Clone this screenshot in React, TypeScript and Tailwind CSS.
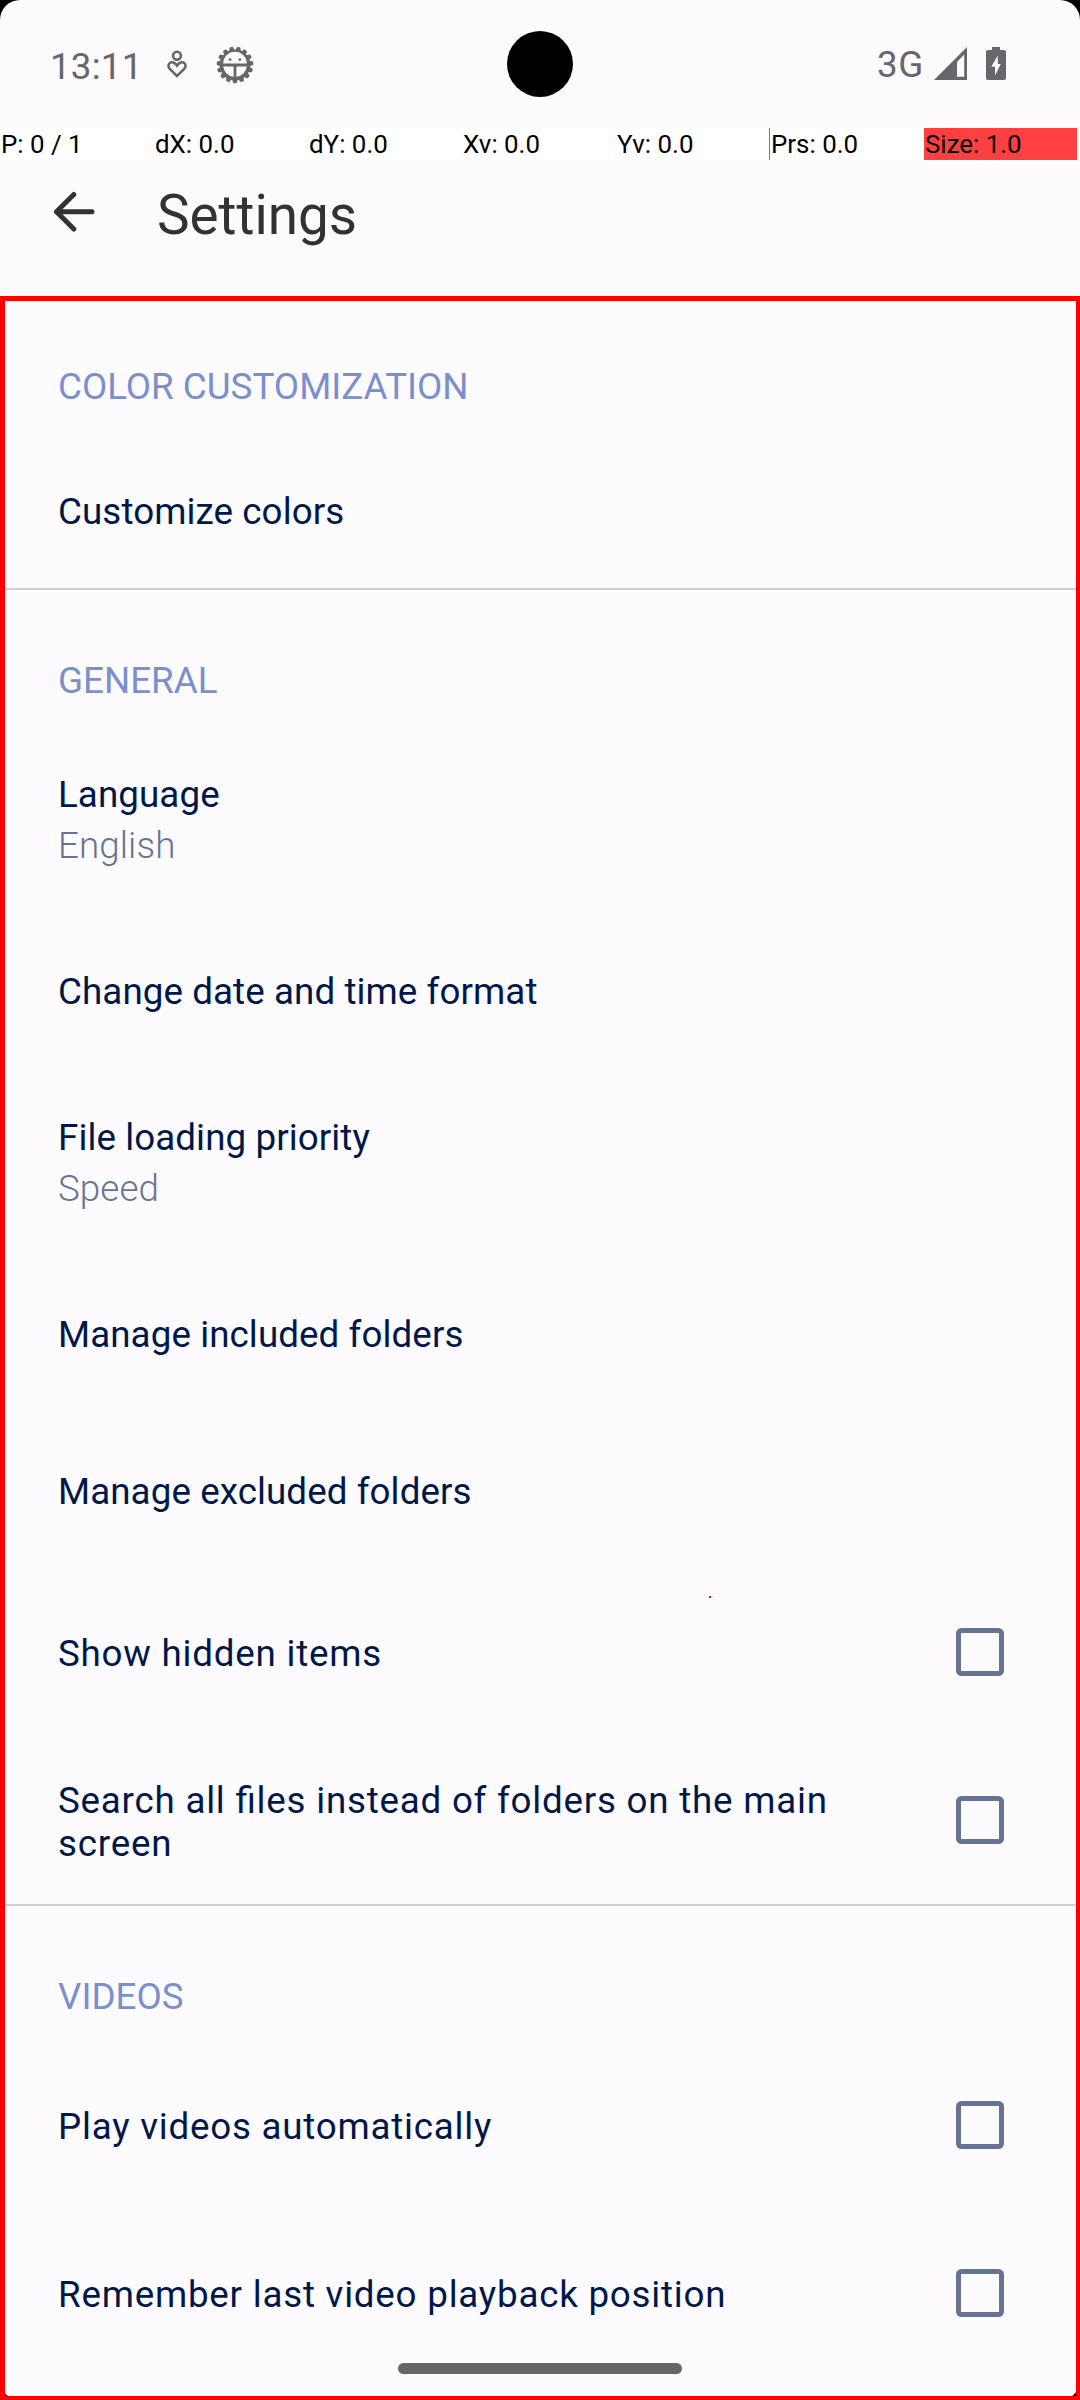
const GEAR_TEETH = Array.from({ length: 15 }, (_, i) => i * 24 + 12);

function HeartPersonIcon() {
  return (
    <svg className="h-7 w-5" viewBox="0 0 20 28" fill="none" stroke="#68666a" strokeWidth="2.6">
      <circle cx="10" cy="5.7" r="3.9" />
      <path d="M10 26 L3 19.2 C1 17 1 14.6 2.7 13.1 C4.6 11.6 7.8 12.2 10 15.6 C12.2 12.2 15.4 11.6 17.3 13.1 C19 14.6 19 17 17 19.2 Z" />
    </svg>
  );
}

function GearFaceIcon() {
  return (
    <svg className="size-9.5" viewBox="-19 -19 38 38" fill="#68666a">
      {GEAR_TEETH.map((a) => (
        <path key={a} d="M-3.1 -14 L-1.6 -18.3 L1.6 -18.3 L3.1 -14 Z" transform={`rotate(${a})`} />
      ))}
      <path
        fillRule="evenodd"
        d="M0 -15.2 A15.2 15.2 0 1 1 0 15.2 A15.2 15.2 0 1 1 0 -15.2 Z M-11.8 -1.5 H11.8 A11.8 11.8 0 0 0 -11.8 -1.5 Z M-11.8 1.4 A11.8 11.8 0 0 0 -1.4 11.8 V1.4 Z M11.8 1.4 A11.8 11.8 0 0 1 1.4 11.8 V1.4 Z"
      />
      <circle cx="-4.9" cy="-5.4" r="1.4" />
      <circle cx="4.9" cy="-5.4" r="1.4" />
    </svg>
  );
}

function SignalIcon() {
  return (
    <svg className="ml-[10px] h-[33px] w-[33px]" viewBox="0 0 33 33" fill="#68666a">
      <path fillRule="evenodd" d="M0 33 L33 0 V33 Z M23 17 V29.8 H30.2 V7.6 L23 15 Z" />
    </svg>
  );
}

function BatteryIcon() {
  return (
    <svg className="ml-[19px] h-[33px] w-5" viewBox="0 0 20 33" fill="#68666a">
      <path
        fillRule="evenodd"
        d="M6 0 H14 V3 H18 Q20 3 20 5 V31 Q20 33 18 33 H2 Q0 33 0 31 V5 Q0 3 2 3 H6 Z M11.8 8.5 L5.3 19.7 H9 V28.5 L14.8 17 H11.8 Z"
      />
    </svg>
  );
}

function BackArrow() {
  return (
    <svg className="h-[42px] w-[42px]" viewBox="0 0 42 42" fill="none" stroke="#323134" strokeWidth="5" strokeLinecap="round" strokeLinejoin="round">
      <path d="M39 20.8 H3.5 M20.8 3.5 L3.5 20.8 L20.8 38" />
    </svg>
  );
}

function PointerCell({ label, className = "bg-white" }: { label: string; className?: string }) {
  return <div className={`h-8 w-[153px] pl-px text-[25.9px] leading-[32px] text-black ${className}`}>{label}</div>;
}

function SectionHeader({ label, className }: { label: string; className: string }) {
  return <h2 className={`px-[53px] text-[36.75px] leading-[43px] text-[#7a90cc] ${className}`}>{label}</h2>;
}

function Row({ title, value, className }: { title: string; value?: string; className: string }) {
  return (
    <div className={`px-[53px] text-[36.75px] leading-[43px] tracking-[0.08px] ${className}`}>
      <div className="text-[#001849]">{title}</div>
      {value && <div className="mt-2 font-light text-[#667493]">{value}</div>}
    </div>
  );
}

function CheckRow({ title, className = "pt-16" }: { title: string; className?: string }) {
  return (
    <div className="flex h-[168px] justify-between pr-[72px] pl-[53px]">
      <div className={`w-[800px] text-[36.75px] leading-[43px] tracking-[0.77px] text-[#001849] [font-feature-settings:'liga'] ${className}`}>
        {title}
      </div>
      <div className="mt-15 size-12 rounded-[5.5px] border-5 border-[#667493]" />
    </div>
  );
}

export default function App() {
  return (
    <div className="h-[2400px] w-[1080px] overflow-hidden bg-black font-['Roboto',sans-serif]">
      <div className="relative flex h-[2400px] flex-col rounded-[20px] bg-[#fefbff]">
        <header className="flex h-32 shrink-0 items-start justify-between pr-[74px] pl-[50px] text-[#68666a]">
          <div className="flex">
            <span className="mt-[45px] w-[117px] text-[36.75px] leading-[43px] tracking-[0.2px]">13:11</span>
            <div className="mt-[50px]">
              <HeartPersonIcon />
            </div>
            <div className="mt-[46px] ml-[29px]">
              <GearFaceIcon />
            </div>
          </div>
          <div className="mt-[47px] flex">
            <span className="-mt-1 text-[36.75px] leading-[43px] font-[450] tracking-[0.7px]">3G</span>
            <SignalIcon />
            <BatteryIcon />
          </div>
        </header>
        <div className="absolute top-[31px] left-[507px] size-[66px] rounded-full bg-black" />
        <div className="flex h-8 shrink-0 gap-px">
          <PointerCell label="P: 0 / 1" />
          <PointerCell label="dX: 0.0" />
          <PointerCell label="dY: 0.0" />
          <PointerCell label="Xv: 0.0" />
          <PointerCell label="Yv: 0.0" />
          <PointerCell label="Prs: 0.0" className="bg-white shadow-[-1px_0_0_#ff4040]" />
          <PointerCell label="Size: 1.0" className="bg-[#ff4040]" />
        </div>
        <div className="flex h-[136px] shrink-0 pl-[53px]">
          <div className="mt-[31px]">
            <BackArrow />
          </div>
          <h1 className="mt-[23px] ml-[62px] text-[54.8px] leading-[64px] text-[#323134]">Settings</h1>
        </div>
        <main className="flex h-[2104px] flex-col border-4 border-t-5 border-l-5 border-[#ff0000]">
          <SectionHeader label="COLOR CUSTOMIZATION" className="h-[132px] pt-16" />
          <Row title="Customize colors" className="h-[155px] pt-[57px]" />
          <hr className="h-0.5 shrink-0 border-0 bg-[#d1cfd2]" />
          <SectionHeader label="GENERAL" className="h-[137px] pt-[69px]" />
          <Row title="Language" value="English" className="h-[186px] pt-[46px]" />
          <Row title="Change date and time format" className="h-[157px] pt-[57px]" />
          <Row title="File loading priority" value="Speed" className="h-[186px] pt-[46px]" />
          <Row title="Manage included folders" className="h-[157px] pt-[57px]" />
          <Row title="Manage excluded folders" className="h-[155px] pt-[57px]" />
          <CheckRow title="Show hidden items" />
          <CheckRow title="Search all files instead of folders on the main screen" className="pt-[43px]" />
          <hr className="h-0.5 shrink-0 border-0 bg-[#d1cfd2]" />
          <SectionHeader label="VIDEOS" className="h-[135px] pt-[69px]" />
          <CheckRow title="Play videos automatically" />
          <CheckRow title="Remember last video playback position" />
        </main>
        <div className="absolute top-[1596px] left-[709px] size-0.5 bg-[#ff0000]" />
        <div className="absolute top-[2363px] left-[398px] h-[11px] w-[284px] rounded-full bg-[#68666a]" />
      </div>
    </div>
  );
}
